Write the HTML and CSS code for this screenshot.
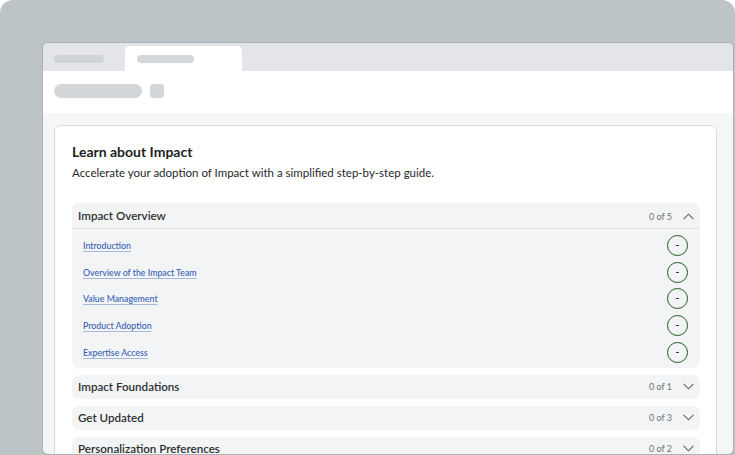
FILE: index.html
```html
<!DOCTYPE html>
<html lang="en">
<head>
<meta charset="utf-8">
<title>Learn about Impact</title>
<link rel="stylesheet" href="styles.css">
</head>
<body>
<div class="frame">
  <div class="window">
    <div class="tabbar">
      <div class="tab"><span class="pill pill-tab"></span></div>
      <div class="tab tab-active"><span class="pill pill-tab pill-active"></span></div>
    </div>
    <div class="toolbar">
      <span class="pill pill-wide"></span>
      <span class="pill pill-square"></span>
    </div>
    <div class="content">
      <div class="card">
        <h1 class="title">Learn about Impact</h1>
        <p class="subtitle">Accelerate your adoption of Impact with a simplified step-by-step guide.</p>
        <div class="sections">
          <div class="section open">
            <div class="section-head">
              <span class="section-name">Impact Overview</span>
              <span class="section-meta"><span class="count">0 of 5</span>
                <svg class="chev" width="11" height="7" viewBox="0 0 11 7"><path d="M0.6 6.2 L5.5 1.2 L10.4 6.2" fill="none" stroke="#5d6366" stroke-width="1.1"/></svg>
              </span>
            </div>
            <div class="section-body">
              <div class="item"><a class="link" href="#">Introduction</a><span class="status"><span class="dash"></span></span></div>
              <div class="item"><a class="link" href="#">Overview of the Impact Team</a><span class="status"><span class="dash"></span></span></div>
              <div class="item"><a class="link" href="#">Value Management</a><span class="status"><span class="dash"></span></span></div>
              <div class="item"><a class="link" href="#">Product Adoption</a><span class="status"><span class="dash"></span></span></div>
              <div class="item"><a class="link" href="#">Expertise Access</a><span class="status"><span class="dash"></span></span></div>
            </div>
          </div>
          <div class="section">
            <div class="section-head">
              <span class="section-name">Impact Foundations</span>
              <span class="section-meta"><span class="count">0 of 1</span>
                <svg class="chev" width="11" height="7" viewBox="0 0 11 7"><path d="M0.6 0.8 L5.5 5.8 L10.4 0.8" fill="none" stroke="#5d6366" stroke-width="1.1"/></svg>
              </span>
            </div>
          </div>
          <div class="section">
            <div class="section-head">
              <span class="section-name">Get Updated</span>
              <span class="section-meta"><span class="count">0 of 3</span>
                <svg class="chev" width="11" height="7" viewBox="0 0 11 7"><path d="M0.6 0.8 L5.5 5.8 L10.4 0.8" fill="none" stroke="#5d6366" stroke-width="1.1"/></svg>
              </span>
            </div>
          </div>
          <div class="section">
            <div class="section-head">
              <span class="section-name">Personalization Preferences</span>
              <span class="section-meta"><span class="count">0 of 2</span>
                <svg class="chev" width="11" height="7" viewBox="0 0 11 7"><path d="M0.6 0.8 L5.5 5.8 L10.4 0.8" fill="none" stroke="#5d6366" stroke-width="1.1"/></svg>
              </span>
            </div>
          </div>
        </div>
      </div>
    </div>
  </div>
</div>
</body>
</html>
```

FILE: styles.css
```css
* { box-sizing: border-box; }
html, body { margin: 0; padding: 0; background: #ffffff; }
body { font-family: "Lato", "Noto Sans", sans-serif; color: #202223; }

.frame {
  width: 735px;
  height: 455px;
  background: #bcc4c6;
  border-radius: 13px 13px 0 0;
  padding: 43px 2px 1px 43px;
  overflow: hidden;
}

.window {
  height: 411px;
  background: #f5f6f7;
  border-radius: 5px;
  overflow: hidden;
  display: flex;
  flex-direction: column;
  box-shadow: 0 0 0 1px rgba(120, 130, 135, 0.25);
}

.tabbar {
  height: 28px;
  flex: none;
  background: #e3e5e8;
  display: flex;
  align-items: flex-end;
  padding-left: 11px;
}
.tab {
  height: 25px;
  width: 71px;
  padding-top: 9px;
}
.tab-active {
  width: 117px;
  background: #ffffff;
  border-radius: 5px 5px 0 0;
  padding-left: 12px;
}
.pill {
  display: block;
  background: #d4d7da;
  border-radius: 7px;
}
.pill-tab { width: 50px; height: 8px; border-radius: 4px; background: #d1d4d7; }
.pill-active { width: 57px; background: #d5d8db; }

.toolbar {
  height: 42px;
  flex: none;
  background: #ffffff;
  display: flex;
  gap: 8px;
  padding: 13px 11px 0;
}
.pill-wide { width: 88px; height: 14px; }
.pill-square { width: 14px; height: 14px; border-radius: 3px; }

.content {
  flex: 1;
  padding: 12px 16px 0 11px;
  overflow: hidden;
}

.card {
  background: #ffffff;
  border: 1px solid #d8dbde;
  border-radius: 6px;
  padding: 17px 16px 20px 17px;
  min-height: 400px;
}

.title {
  margin: 0;
  font-size: 14px;
  line-height: 18px;
  font-weight: 700;
  color: #1d1f20;
}
.subtitle {
  margin: 3px 0 0;
  font-size: 11.5px;
  line-height: 18px;
  color: #262829;
}

.sections {
  margin-top: 21px;
  display: flex;
  flex-direction: column;
  gap: 7px;
}
.section {
  background: #f3f4f5;
  border-radius: 7px;
}
.section-head {
  height: 24px;
  display: flex;
  align-items: center;
  justify-content: space-between;
  padding: 0 6px 0 6px;
}
.open .section-head {
  height: 26px;
  border-bottom: 1px solid #e1e3e6;
  padding-top: 1px;
}
.section-name {
  font-size: 11.6px;
  line-height: 24px;
  font-weight: 600;
  color: #2d3032;
}
.section-meta {
  display: flex;
  align-items: center;
  gap: 11px;
}
.count {
  font-size: 9px;
  color: #6e7376;
}
.chev { display: block; }

.section-body {
  padding: 3px 12px 2px 11px;
}
.item {
  height: 26.75px;
  display: flex;
  align-items: center;
  justify-content: space-between;
}
.link {
  font-size: 8.8px;
  font-weight: 500;
  color: #3560b6;
  text-decoration: underline;
  text-decoration-color: #a9b8d8;
  text-underline-offset: 2px;
  text-decoration-thickness: 1px;
}
.status {
  width: 21px;
  height: 21px;
  border: 1.6px solid #1f581f;
  border-radius: 50%;
  display: flex;
  align-items: center;
  justify-content: center;
}
.dash {
  width: 3px;
  height: 1px;
  background: #3a3d3f;
}
```
